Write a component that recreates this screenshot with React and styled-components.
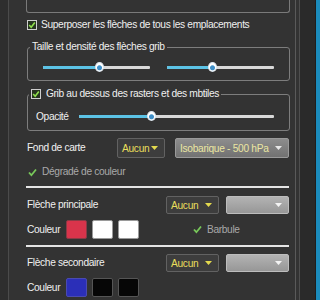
import React from "react";
import styled, { createGlobalStyle } from "styled-components";

const Global = createGlobalStyle`
  html, body { margin: 0; padding: 0; background: #333333; }
  body { font-family: "Liberation Sans", Arial, sans-serif; }
`;

const Frame = styled.div`
  width: 320px;
  height: 300px;
  overflow: hidden;
  display: flex;
  background: #333333;
`;

const LeftRail = styled.div`
  width: 8px;
  flex: none;
  background: #2e2e2e;
  border-right: 1px solid #4b4b4b;
`;

const Panel = styled.div`
  width: 263px;
  flex: none;
  padding: 0 5px 0 18px;
  display: flex;
  flex-direction: column;
`;

const RightRail = styled.div`
  display: flex;
  flex: 1;
`;

const Strip = styled.div`
  width: ${(p) => p.$w}px;
  flex: none;
  background: ${(p) => p.$c};
`;

const TopBox = styled.div`
  height: 13px;
  box-sizing: border-box;
  margin-left: -1px;
  border: 1px solid #7a7a7a;
  border-top: none;
  border-radius: 0 0 3px 3px;
`;

const Row = styled.div`
  display: flex;
  align-items: center;
  height: ${(p) => p.$h}px;
  margin-top: ${(p) => p.$mt}px;
`;

const Text = styled.span`
  font-size: 10.2px;
  letter-spacing: -0.35px;
  line-height: 14px;
  white-space: nowrap;
  color: ${(p) => (p.$dim ? "#a9a9a9" : "#f0f0f0")};
  ${(p) => (p.$w ? `width: ${p.$w}px; flex: none;` : "")}
`;

const CheckLabel = styled.label`
  display: flex;
  align-items: center;
  gap: ${(p) => p.$gap}px;
  margin-left: ${(p) => p.$ml || 0}px;
`;

const Group = styled.fieldset`
  margin: ${(p) => p.$mt}px 0 0;
  padding: 0;
  border: 1px solid #7d7d7d;
  border-radius: 3px;
  min-width: 0;
`;

const Legend = styled.legend`
  margin-left: ${(p) => p.$ml}px;
  padding: 0 2px;
  display: flex;
  align-items: center;
  gap: 5px;
  height: 14px;
`;

const GroupBody = styled.div`
  display: flex;
  align-items: center;
  justify-content: space-between;
  padding: ${(p) => p.$pt}px 15px ${(p) => p.$pb}px ${(p) => p.$pl}px;
  height: 13px;
`;

const SliderWrap = styled.div`
  position: relative;
  width: ${(p) => p.$w}px;
  height: 13px;
  flex: none;
`;

const Track = styled.div`
  position: absolute;
  left: 0;
  right: 0;
  top: 5px;
  height: 3px;
  background: #d9d9d9;
  border-radius: 1px;
`;

const Fill = styled.div`
  height: 100%;
  background: #5cc3e6;
  border-radius: 1px;
`;

const Thumb = styled.div`
  position: absolute;
  top: 1px;
  width: 9px;
  height: 10px;
  margin-left: -4px;
  box-sizing: border-box;
  border-radius: 50%;
  background: radial-gradient(circle at 50% 60%, #3f8fc8 0 2px, #ffffff 3px);
  border: 1px solid #dfe8f0;
`;

const Slider = ({ w, value }) => (
  <SliderWrap $w={w}>
    <Track>
      <Fill style={{ width: `${value * 100}%` }} />
    </Track>
    <Thumb style={{ left: `${value * 100}%` }} />
  </SliderWrap>
);

const VARIANTS = {
  dark: { bg: "#3d3d3d", border: "#626262", color: "#e9df5c", caret: "#e3d94e" },
  gray: { bg: "linear-gradient(#8d8d8d, #727272)", border: "#9a9a9a", color: "#ebe6a2", caret: "#e8e8e8" },
  light: { bg: "linear-gradient(#b3b3b3, #979797)", border: "#bdbdbd", color: "#fff", caret: "#f4f4f4" },
};

const Select = styled.div`
  display: flex;
  align-items: center;
  justify-content: space-between;
  box-sizing: border-box;
  width: ${(p) => p.$w}px;
  height: ${(p) => p.$h}px;
  padding: 0 6px 0 4px;
  flex: none;
  border-radius: 2px;
  border: 1px solid ${(p) => VARIANTS[p.$v].border};
  background: ${(p) => VARIANTS[p.$v].bg};
  color: ${(p) => VARIANTS[p.$v].color};
  font-size: 10.2px;
  letter-spacing: -0.3px;
  white-space: nowrap;
`;

const Caret = ({ color }) => (
  <svg width="7" height="4" viewBox="0 0 7 4">
    <path d="M0 0 H7 L3.5 4 Z" fill={color} />
  </svg>
);

const Dropdown = ({ v, w, h, children }) => (
  <Select $v={v} $w={w} $h={h}>
    <span>{children}</span>
    <Caret color={VARIANTS[v].caret} />
  </Select>
);

const BoxCheck = () => (
  <svg width="10" height="10" viewBox="0 0 10 10">
    <rect x="0.5" y="0.5" width="9" height="9" fill="#26331f" stroke="#cfcfcf" />
    <path d="M2.2 5 L4.2 7.2 L7.8 2.6" fill="none" stroke="#8fe04c" strokeWidth="1.6" />
  </svg>
);

const Tick = () => (
  <svg width="9" height="9" viewBox="0 0 9 9">
    <path d="M1 4.5 L3.4 7.2 L8 1.5" fill="none" stroke="#78c85a" strokeWidth="1.8" />
  </svg>
);

const Separator = styled.div`
  height: 2px;
  margin: ${(p) => p.$mt}px 0 0 -1px;
  width: 263px;
  background: #e4e4e4;
`;

const HeaderRow = styled.div`
  display: flex;
  align-items: center;
  justify-content: space-between;
  height: ${(p) => p.$h}px;
  margin-top: ${(p) => p.$mt}px;
`;

const Controls = styled.div`
  display: flex;
  align-items: center;
  gap: ${(p) => p.$gap}px;
  margin-right: 1px;
`;

const Swatches = styled.div`
  display: flex;
  gap: 5px;
`;

const Swatch = styled.div`
  width: 21px;
  height: 19px;
  box-sizing: border-box;
  border-radius: 2px;
  border: 1px solid ${(p) => p.$border};
  background: ${(p) => p.$c};
`;

const ColorRow = ({ colors, barbule }) => (
  <Row $h={19} $mt={6}>
    <Text $w={39}>Couleur</Text>
    <Swatches>
      {colors.map((c, i) => (
        <Swatch key={i} $c={c[0]} $border={c[1]} />
      ))}
    </Swatches>
    {barbule && (
      <CheckLabel $gap={5} $ml={54}>
        <Tick />
        <Text $dim>Barbule</Text>
      </CheckLabel>
    )}
  </Row>
);

export default function App() {
  return (
    <>
      <Global />
      <Frame>
        <LeftRail />
        <Panel>
          <TopBox />
          <Row $h={14} $mt={5}>
            <CheckLabel $gap={4}>
              <BoxCheck />
              <Text>Superposer les flèches de tous les emplacements</Text>
            </CheckLabel>
          </Row>

          <Group $mt={8}>
            <Legend $ml={2}>
              <Text>Taille et densité des flèches grib</Text>
            </Legend>
            <GroupBody $pt={7} $pb={6} $pl={15}>
              <Slider w={107} value={0.52} />
              <Slider w={107} value={0.42} />
            </GroupBody>
          </Group>

          <Group $mt={6}>
            <Legend $ml={1}>
              <BoxCheck />
              <Text>Grib au dessus des rasters et des mbtiles</Text>
            </Legend>
            <GroupBody $pt={9} $pb={7} $pl={8}>
              <Text>Opacité</Text>
              <Slider w={195} value={0.37} />
            </GroupBody>
          </Group>

          <HeaderRow $h={20} $mt={7}>
            <Text>Fond de carte</Text>
            <Controls $gap={10}>
              <Dropdown v="dark" w={48} h={20}>Aucun</Dropdown>
              <Dropdown v="gray" w={114} h={20}>Isobarique - 500 hPa</Dropdown>
            </Controls>
          </HeaderRow>

          <Row $h={14} $mt={7}>
            <CheckLabel $gap={5} $ml={1}>
              <Tick />
              <Text $dim>Dégradé de couleur</Text>
            </CheckLabel>
          </Row>

          <Separator $mt={7} />

          <HeaderRow $h={18} $mt={8}>
            <Text>Flèche principale</Text>
            <Controls $gap={7}>
              <Dropdown v="dark" w={53} h={18}>Aucun</Dropdown>
              <Dropdown v="light" w={63} h={18}></Dropdown>
            </Controls>
          </HeaderRow>

          <ColorRow
            colors={[["#d9344b", "#8a3a45"], ["#ffffff", "#9a9a9a"], ["#ffffff", "#9a9a9a"]]}
            barbule
          />

          <Separator $mt={6} />

          <HeaderRow $h={18} $mt={7}>
            <Text>Flèche secondaire</Text>
            <Controls $gap={7}>
              <Dropdown v="dark" w={53} h={18}>Aucun</Dropdown>
              <Dropdown v="light" w={63} h={18}></Dropdown>
            </Controls>
          </HeaderRow>

          <ColorRow
            colors={[["#2b2fb8", "#4a4ab0"], ["#060606", "#555555"], ["#060606", "#555555"]]}
          />
        </Panel>
        <RightRail>
          <Strip $w={1} $c="#5a5a5a" />
          <Strip $w={3} $c="#333333" />
          <Strip $w={1} $c="#4e4e4e" />
          <Strip $w={15} $c="#2a2a2a" />
          <Strip $w={1} $c="#1e1e1e" />
          <Strip $w={10} $c="#1b8cbd" />
        </RightRail>
      </Frame>
    </>
  );
}
